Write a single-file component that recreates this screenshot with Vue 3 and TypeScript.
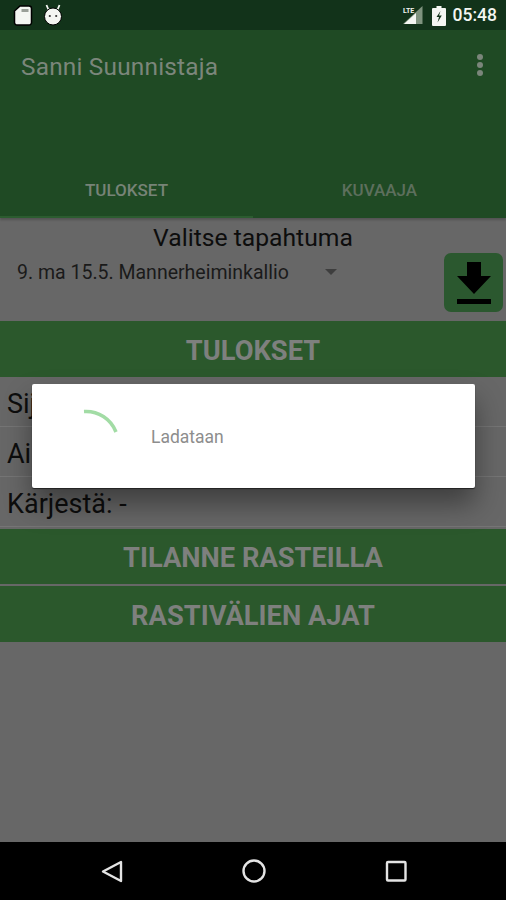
<script setup lang="ts">
const rows = ['Sijoitus: -', 'Aika: -', 'Kärjestä: -']
</script>

<template>
  <div class="phone">
    <div class="status">
      <div class="status-left">
        <svg width="20" height="23" viewBox="0 0 20 23">
          <path d="M7 2h9a2.500 2.500 0 0 1 2.500 2.500v14a2.500 2.500 0 0 1-2.500 2.500H4a2.500 2.500 0 0 1-2.500-2.500V7z" fill="#f4f6f2" stroke="#000" stroke-width="1.500" />
          <rect x="8.500" y="5" width="7" height="3" fill="#9a9f98" />
        </svg>
        <svg width="20" height="22" viewBox="0 0 20 22">
          <path d="M3.500 1l2.500 6M16.500 1L14 7" stroke="#f4f6f2" stroke-width="1.800" />
          <circle cx="10" cy="12.500" r="8.500" fill="#f4f6f2" stroke="#000" stroke-width="1" />
          <circle cx="6.800" cy="12" r="1.100" fill="#333" />
          <circle cx="13.200" cy="12" r="1.100" fill="#333" />
        </svg>
      </div>
      <div class="status-right">
        <svg width="22" height="20" viewBox="0 0 22 20">
          <path d="M21.500 1v18H2z" fill="#7f937f" />
          <path d="M15 8v11H3z" fill="#f4f6f2" />
          <text x="2" y="8" class="lte">LTE</text>
        </svg>
        <svg class="battery" width="14" height="21" viewBox="0 0 14 21">
          <path d="M4.500 1h5v2H13a1 1 0 0 1 1 1v16a1 1 0 0 1-1 1H1a1 1 0 0 1-1-1V4a1 1 0 0 1 1-1h3.500z" fill="#f4f6f2" />
          <path d="M8.500 6L4.500 12H7L5.500 17.500 9.800 10.500H7z" fill="#12331a" />
        </svg>
        <span class="clock">05:48</span>
      </div>
    </div>

    <div class="appbar">
      <div class="toolbar">
        <span class="title">Sanni Suunnistaja</span>
        <div class="more"><i></i><i></i><i></i></div>
      </div>
      <div class="tabs">
        <div class="tab active">TULOKSET</div>
        <div class="tab">KUVAAJA</div>
      </div>
    </div>

    <div class="content">
      <div class="picker">
        <div class="picker-main">
          <div class="picker-title">Valitse tapahtuma</div>
          <div class="select">
            <span>9. ma 15.5. Mannerheiminkallio</span>
            <b class="caret"></b>
          </div>
        </div>
        <button class="download">
          <svg width="36" height="42" viewBox="0 0 36 42">
            <path d="M11 0h14v14h10L18 32 1 14h10z" fill="#000" />
            <rect x="1" y="37" width="34" height="5" fill="#000" />
          </svg>
        </button>
      </div>

      <div class="section">TULOKSET</div>
      <div v-for="row in rows" :key="row" class="row">{{ row }}</div>
      <div class="section second">TILANNE RASTEILLA</div>
      <div class="section third">RASTIVÄLIEN AJAT</div>
    </div>

    <div class="nav">
      <svg width="24" height="24" viewBox="0 0 24 24">
        <path d="M21 3v19L3 12.500z" fill="none" stroke="#e4e4e4" stroke-width="2.400" stroke-linejoin="round" />
      </svg>
      <svg width="24" height="24" viewBox="0 0 24 24">
        <circle cx="12" cy="12" r="10.500" fill="none" stroke="#e4e4e4" stroke-width="2.400" />
      </svg>
      <svg width="24" height="24" viewBox="0 0 24 24">
        <rect x="3" y="3" width="18.500" height="18.500" rx="1" fill="none" stroke="#e4e4e4" stroke-width="2.400" />
      </svg>
    </div>

    <div class="dialog">
      <svg class="spinner" width="50" height="50" viewBox="0 0 50 50">
        <path d="M12 3.500A32 32 0 0 1 44 24" fill="none" stroke="#a2dca5" stroke-width="3.500" />
      </svg>
      <span class="loading">Ladataan</span>
    </div>
  </div>
</template>

<style scoped>
.phone {
  position: relative;
  width: 506px;
  height: 900px;
  display: flex;
  flex-direction: column;
  overflow: hidden;
  background: #676767;
  font-family: Roboto, "Liberation Sans", sans-serif;
  color: #0c0c0c;
}

.status {
  height: 30px;
  flex: none;
  display: flex;
  justify-content: space-between;
  align-items: center;
  padding: 0 9px 0 13px;
  background: #12331a;
}

.status-left {
  display: flex;
  align-items: center;
  gap: 10px;
}

.status-right {
  display: flex;
  align-items: center;
}

.lte {
  font-size: 7px;
  font-weight: 700;
  fill: #f4f6f2;
}

.battery {
  margin-left: 9px;
}

.clock {
  margin-left: 7px;
  font-size: 17.5px;
  font-weight: 500;
  color: #f4f6f2;
}

.appbar {
  height: 188px;
  flex: none;
  display: flex;
  flex-direction: column;
  justify-content: space-between;
  background: #1f4a24;
}

.toolbar {
  display: flex;
  justify-content: space-between;
  align-items: center;
  padding: 22px 23px 0 21px;
}

.title {
  font-size: 24.4px;
  color: #7b867b;
  letter-spacing: 0.2px;
}

.more {
  display: flex;
  flex-direction: column;
  gap: 2px;
  margin-top: -4px;
}

.more i {
  width: 6px;
  height: 6px;
  border-radius: 50%;
  background: #7b867b;
}

.tabs {
  display: flex;
  height: 56px;
  box-shadow: 0 2px 2px rgba(0, 0, 0, 0.2);
}

.tab {
  flex: 1;
  padding-top: 18px;
  text-align: center;
  font-size: 17px;
  font-weight: 500;
  color: #5d6f5d;
  border-bottom: 2px solid transparent;
  box-sizing: border-box;
}

.tab.active {
  color: #778377;
  border-bottom-color: #2c5c30;
}

.content {
  flex: 1;
  display: flex;
  flex-direction: column;
}

.picker {
  position: relative;
  height: 103px;
  flex: none;
  box-sizing: border-box;
  display: flex;
  padding: 6px 3px 0 0;
}

.picker-main {
  flex: 1;
  margin-right: -62px;
}

.picker-title {
  text-align: center;
  font-size: 24.7px;
  line-height: 28px;
  color: #0d0d0d;
}

.select {
  display: flex;
  align-items: center;
  padding: 9px 0 0 17px;
  font-size: 19.5px;
  line-height: 24px;
  color: #1a1a1a;
}

.caret {
  margin-left: 36px;
  margin-top: -2px;
  border-left: 6px solid transparent;
  border-right: 6px solid transparent;
  border-top: 6px solid #3e3e3e;
}

.download {
  width: 59px;
  height: 59px;
  flex: none;
  margin-top: 29px;
  padding: 0;
  border: none;
  border-radius: 7px;
  background: #2b582f;
  display: flex;
  align-items: center;
  justify-content: center;
}

.section {
  height: 56px;
  flex: none;
  display: flex;
  align-items: center;
  justify-content: center;
  background: #2b582c;
  color: #7e807e;
  font-size: 27.3px;
  font-weight: 700;
  padding-top: 3px;
  box-sizing: border-box;
}

.second {
  margin-top: 2px;
  height: 55px;
  padding-top: 2px;
}

.third {
  margin-top: 2px;
  height: 56px;
  padding-top: 3px;
}

.row {
  height: 50px;
  flex: none;
  box-sizing: border-box;
  display: flex;
  align-items: center;
  padding: 5px 0 0 7px;
  border-bottom: 1px solid #757575;
  font-size: 27px;
  color: #0d0d0d;
}

.nav {
  height: 58px;
  flex: none;
  display: flex;
  justify-content: space-between;
  align-items: center;
  padding: 0 98px 0 100px;
  background: #000;
}

.dialog {
  position: absolute;
  left: 32px;
  top: 384px;
  width: 443px;
  height: 104px;
  display: flex;
  align-items: center;
  border-radius: 2px;
  background: #fff;
  box-shadow: 0 1px 1px #222, 0 16px 28px rgba(0, 0, 0, 0.4);
}

.spinner {
  margin-left: 40px;
  align-self: flex-start;
  margin-top: 24px;
}

.loading {
  margin-left: 29px;
  margin-top: 1px;
  font-size: 17.5px;
  color: #8d8d8d;
}
</style>
